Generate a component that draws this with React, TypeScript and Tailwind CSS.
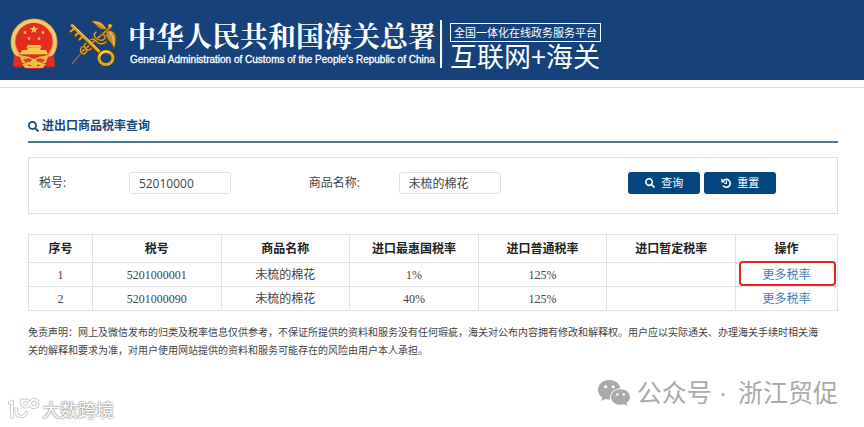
import React, { useState } from 'react';
// icons
import { FaSearch } from 'react-icons/fa';

const columns = [
  { title: '序号', width: 'w-[7.9%]' },
  { title: '税号', width: 'w-[15.9%]' },
  { title: '商品名称', width: 'w-[15.9%]' },
  { title: '进口最惠国税率', width: 'w-[15.9%]' },
  { title: '进口普通税率', width: 'w-[15.9%]' },
  { title: '进口暂定税率', width: 'w-[15.9%]' },
  { title: '操作', width: 'w-[12.6%]' },
];

const rates = [
  { id: 1, code: '5201000001', name: '未梳的棉花', mfn: '1%', general: '125%', interim: '', marked: true },
  { id: 2, code: '5201000090', name: '未梳的棉花', mfn: '40%', general: '125%', interim: '', marked: false },
];

const star = 'M0 -1 L.24 -.31 L.95 -.31 L.38 .12 L.59 .81 L0 .4 L-.59 .81 L-.38 .12 L-.95 -.31 L-.24 -.31 Z';

const NationalEmblem = () => (
  <svg className="h-[52px] w-12 shrink-0" viewBox="0 0 48 52" aria-hidden="true">
    <path d="M6 35 L3 48 Q8 51 14 49 L18 51 H30 L34 49 Q40 51 45 48 L42 35 Z" fill="#c9241c" />
    <circle cx="24" cy="24" r="23.5" fill="#dfa545" />
    <circle cx="24" cy="24" r="21" fill="none" stroke="#f3cc72" strokeWidth="3" />
    <circle cx="24" cy="23.5" r="18.5" fill="#e42b20" />
    <g fill="#f4c64e">
      <path d={star} transform="translate(24 11.5) scale(4.6)" />
      <path d={star} transform="translate(15 14.5) scale(2.2)" />
      <path d={star} transform="translate(33 14.5) scale(2.2)" />
      <path d={star} transform="translate(19 20.5) scale(2.2)" />
      <path d={star} transform="translate(29 20.5) scale(2.2)" />
      <path d="M18 27 H30 L32 29.500 H16 Z" />
      <path d="M17.500 29.500 H30.500 V32 H36 L38 36 H10 L12 32 H17.500 Z" />
    </g>
    <path d="M9 36.500 H39" stroke="#cf6b25" strokeWidth="1" />
    <path d="M9 38 Q17 37 24 41 Q31 37 39 38 L36 45 H12 Z" fill="#e9b64c" />
    <path d="M4 37 L10 39 L13 47 L6 49 L3 48 Z M44 37 L38 39 L35 47 L42 49 L45 48 Z" fill="#dc3022" />
    <path d="M13 42 Q19 38 24 43 Q29 38 35 42 L32 45 Q28 42 24 46 Q20 42 16 45 Z" fill="#cf4a22" />
    <circle cx="24" cy="45" r="3.500" fill="#f0c04f" />
    <path d="M12 46 L17 45 L19 48 H29 L31 45 L36 46 L33 50 H15 Z" fill="#e8b54a" />
  </svg>
);

const CustomsEmblem = () => (
  <svg className="h-[50px] w-[50px] shrink-0" viewBox="0 0 50 50" aria-hidden="true" fill="none" strokeLinecap="round">
    {/* winged staff */}
    <path d="M4 45 L14 33" stroke="#8c6a52" strokeWidth="1.200" />
    <path d="M13 34 L42 9" stroke="#6d4310" strokeWidth="2.500" />
    <path d="M13 33.500 L42 8.500" stroke="#e3b23a" strokeWidth="1.300" />
    <path d="M23 2 Q32 1 35 5 L39 10 Q32 12 28 6 Q26 4 23 2 Z" fill="#c98f22" stroke="#5f3c10" strokeWidth=".7" />
    <path d="M26 3 Q33 4 37 9" stroke="#f7dd78" />
    <path d="M41 11 Q48 12 48 19 Q48 26 46 30 Q44 24 41 22 Q37 18 38 13 Z" fill="#c98f22" stroke="#5f3c10" strokeWidth=".7" />
    <path d="M42 13 Q46 18 46 26" stroke="#f7dd78" />
    <circle cx="42" cy="7" r="2.200" fill="#efc651" stroke="#69430f" strokeWidth=".7" />
    <path d="M28 13 Q24 17 29 20 Q35 23 37 19 Q38 15 33 16 M20 23 Q24 18 28 22 Q32 27 38 23 M13 29 Q11 34 16 35 Q20 33 18 29 Q15 26 13 29 M17 25 Q15 29 20 31 Q25 31 23 26 Q20 22 17 25" stroke="#6d4310" strokeWidth="2.400" />
    <path d="M28 13 Q24 17 29 20 Q35 23 37 19 Q38 15 33 16 M20 23 Q24 18 28 22 Q32 27 38 23 M13 29 Q11 34 16 35 Q20 33 18 29 Q15 26 13 29 M17 25 Q15 29 20 31 Q25 31 23 26 Q20 22 17 25" stroke="#dba732" strokeWidth="1.200" />
    {/* key */}
    <path d="M4 7 L33 35" stroke="#553508" strokeWidth="4.600" />
    <path d="M7 9 L2 13 M11 13 L7 17 M15 17 L11 21" stroke="#553508" strokeWidth="3.600" />
    <path d="M4 6.500 L33 34.500" stroke="#d79f2c" strokeWidth="3" />
    <path d="M7 9 L2.500 12.500 M11 13 L7.500 16.500 M15 17 L11.500 20.500" stroke="#dba732" strokeWidth="2" />
    <path d="M5 6 L33 33" stroke="#fae58b" strokeWidth=".9" />
    <ellipse cx="38" cy="39" rx="7" ry="6.500" stroke="#553508" strokeWidth="4.600" />
    <ellipse cx="38" cy="39" rx="7" ry="6.500" stroke="#dda934" strokeWidth="3" />
    <path d="M32 37 Q35 31 41 33" stroke="#fae58b" strokeWidth="1.100" />
  </svg>
);

const ResetIcon = () => (
  <svg className="size-[10px]" viewBox="0 0 16 16" aria-hidden="true" fill="none" stroke="currentColor">
    <path d="M3.500 4.500 A6.300 6.300 0 1 1 3.300 12.200" strokeWidth="2.600" />
    <path d="M0.500 0.500 V7 H7 Z" fill="currentColor" stroke="none" />
    <path d="M8.700 4.500 V8.800 H5.500" strokeWidth="1.700" />
  </svg>
);

const WechatLogo = () => (
  <svg className="h-[26px] w-8 shrink-0" viewBox="0 0 32 26" aria-hidden="true">
    <path d="M11.500 0 C5 0 0 4.300 0 10 C0 13.200 1.700 15.800 4.300 17.600 L3.300 21 L7.300 18.900 C9 19.400 10.500 19.600 12.300 19.500 C11 13 16 8.500 22.500 8.200 C21.500 3.500 17 0 11.500 0 Z" fill="#aaaaaa" />
    <path d="M22.500 9.200 C17.200 9.200 13 12.700 13 17 C13 21.400 17.200 24.800 22.500 24.800 C23.800 24.800 25 24.600 26.100 24.300 L29.300 26 L28.500 23 C30.700 21.500 32 19.400 32 17 C32 12.700 27.800 9.200 22.500 9.200 Z" fill="#aaaaaa" />
    <g fill="#ffffff">
      <circle cx="7.700" cy="6.800" r="1.500" />
      <circle cx="15.200" cy="6.800" r="1.500" />
      <circle cx="19.400" cy="14.500" r="1.300" />
      <circle cx="25.700" cy="14.500" r="1.300" />
    </g>
  </svg>
);

const dataMark = 'M1.500 5 L4 4 V19 M8 11 Q8 18.500 13 18.500 Q17 18.500 18.500 14.500 M14 2 V6';

const DataLogo = () => (
  <svg className="h-[22px] w-8 shrink-0" viewBox="0 0 32 22" aria-hidden="true" fill="none" strokeLinecap="round">
    <g stroke="#bbbbbb" strokeWidth="3.400">
      <path d={dataMark} />
      <circle cx="17.500" cy="5.500" r="3.300" />
      <circle cx="26" cy="5.500" r="3.800" />
    </g>
    <g stroke="#ffffff" strokeWidth="2">
      <path d={dataMark} />
      <circle cx="17.500" cy="5.500" r="3.300" />
      <circle cx="26" cy="5.500" r="3.800" />
    </g>
  </svg>
);

const App = () => {

  const [code, setCode] = useState('52010000');
  const [goodsName, setGoodsName] = useState('未梳的棉花');

  const handleReset = () => {
    setCode('');
    setGoodsName('');
  };

  return (
    <div className="bg-white text-xs text-[#444444] font-['Open_Sans','Noto_Sans_CJK_SC',sans-serif]">
      <header className="flex h-20 items-center bg-[#16417a] pl-[10px] pt-2 text-white">
        <NationalEmblem />
        <div className="ml-[10px]">
          <CustomsEmblem />
        </div>
        <div className="ml-[10px] flex flex-col">
          <h1 className="whitespace-nowrap text-[28px] leading-8 font-bold font-['Noto_Serif_CJK_SC','Noto_Sans_CJK_SC',serif]">
            中华人民共和国海关总署
          </h1>
          <p className="whitespace-nowrap pl-0.5 text-[10px] leading-[18px] font-['Liberation_Sans',sans-serif] [-webkit-text-stroke:0.3px_white]">
            General Administration of Customs of the People's Republic of China
          </p>
        </div>
        <div className="ml-1 h-12 w-0.5 bg-white"></div>
        <div className="ml-2 flex flex-col items-start pt-1 font-['Noto_Sans_CJK_SC',sans-serif]">
          <div className="whitespace-nowrap border border-white px-[3px] text-[11px] leading-[17px]">
            全国一体化在线政务服务平台
          </div>
          <div className="whitespace-nowrap text-[27px] leading-7">互联网+海关</div>
        </div>
      </header>

      <div className="mt-[7px] border-t border-[#dddddd]"></div>

      <main className="mr-[26px] ml-7 pt-7">
        <h2 className="flex items-center gap-[3px] border-b-2 border-[#4f7797] pb-[5px] leading-5 font-bold text-[#164a7c]">
          <FaSearch className="size-[11px]" />
          进出口商品税率查询
        </h2>

        <form
          className="mt-3.5 grid grid-cols-[90fr_180fr_90fr_230fr_209fr] items-center border border-[#dddddd] pt-[14px] pb-[19px] pl-[10px]"
          onSubmit={(e) => e.preventDefault()}
        >
          <label htmlFor="code">税号:</label>
          <div>
            <input
              id="code"
              type="text"
              className="h-[22px] w-[102px] rounded-[3px] border border-[#dce2e2] px-[9px] text-xs"
              value={code}
              onChange={(e) => setCode(e.target.value)}
            />
          </div>
          <label htmlFor="goods-name">商品名称:</label>
          <div>
            <input
              id="goods-name"
              type="text"
              className="h-[22px] w-[102px] rounded-[3px] border border-[#dce2e2] px-[9px] text-xs"
              value={goodsName}
              onChange={(e) => setGoodsName(e.target.value)}
            />
          </div>
          <div className="flex gap-1">
            <button type="submit" className="flex h-[22px] w-[72px] items-center justify-center gap-1.5 rounded-[3px] bg-[#04467e] text-[11px] text-white">
              <FaSearch className="size-[10px]" />
              查询
            </button>
            <button type="button" className="flex h-[22px] w-[72px] items-center justify-center gap-1.5 rounded-[3px] bg-[#04467e] text-[11px] text-white" onClick={handleReset}>
              <ResetIcon />
              重置
            </button>
          </div>
        </form>

        <table className="mt-5 w-full table-fixed border-collapse text-center">
          <thead>
            <tr className="h-7">
              {columns.map((col) => (
                <th key={col.title} className={`${col.width} border border-[#e2e2e2] font-bold text-[#222222]`}>{col.title}</th>
              ))}
            </tr>
          </thead>
          <tbody>
            {rates.map((row) => (
              <tr key={row.id} className="h-6 font-['Liberation_Serif','Noto_Sans_CJK_SC',serif]">
                <td className="border border-[#e2e2e2]">{row.id}</td>
                <td className="border border-[#e2e2e2]">{row.code}</td>
                <td className="border border-[#e2e2e2]">{row.name}</td>
                <td className="border border-[#e2e2e2]">{row.mfn}</td>
                <td className="border border-[#e2e2e2]">{row.general}</td>
                <td className="border border-[#e2e2e2]">{row.interim}</td>
                <td className="relative border border-[#e2e2e2]">
                  <a href="#" className="text-[#3f7cb5]">更多税率</a>
                  {row.marked && (
                    <span className="pointer-events-none absolute -top-0.5 right-px bottom-0 left-[3px] rounded-sm border-2 border-[#dc2a20]"></span>
                  )}
                </td>
              </tr>
            ))}
          </tbody>
        </table>

        <p className="mt-3 pr-3 text-[10px] leading-[18px] font-['Noto_Sans_CJK_SC',sans-serif]">
          免责声明：网上及微信发布的归类及税率信息仅供参考，不保证所提供的资料和服务没有任何瑕疵，海关对公布内容拥有修改和解释权。用户应以实际通关、办理海关手续时相关海关的解释和要求为准，对用户使用网站提供的资料和服务可能存在的风险由用户本人承担。
        </p>
      </main>

      <footer className="mt-[18px] flex items-start justify-between pr-[26px] pl-2 font-['Noto_Sans_CJK_SC',sans-serif]">
        <div className="mt-5 flex items-center gap-0.5">
          <DataLogo />
          <span className="text-lg leading-6 text-white [text-shadow:0_0_1px_#888,0_0_2px_#999,0_0_2px_#aaa]">大数跨境</span>
        </div>
        <div className="flex items-center gap-[7px]">
          <WechatLogo />
          <span className="text-[25px] leading-8 text-[#aaaaaa] font-['Liberation_Sans','Noto_Sans_CJK_SC',sans-serif]">
            公众号 <span className="mr-1">·</span> 浙江贸促
          </span>
        </div>
      </footer>
    </div>
  );
};

export default App;
